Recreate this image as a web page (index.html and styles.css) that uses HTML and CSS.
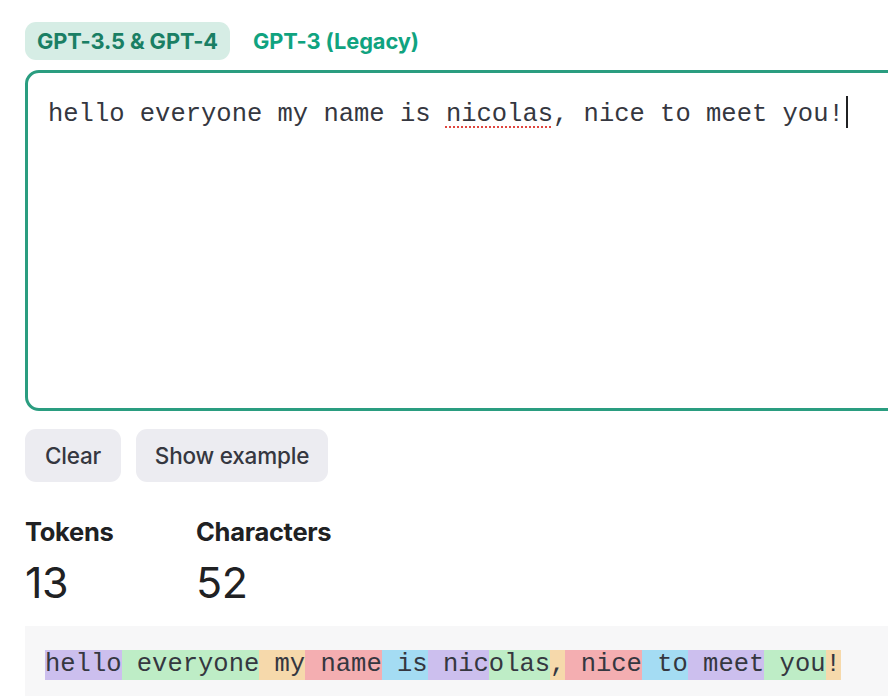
FILE: index.html
```html
<!DOCTYPE html>
<html lang="en">
<head>
<meta charset="utf-8">
<title>Tokenizer</title>
<link rel="stylesheet" href="styles.css">
</head>
<body>
<div class="page">
  <div class="tabs">
    <button class="tab tab-active">GPT-3.5 &amp; GPT-4</button>
    <button class="tab">GPT-3 (Legacy)</button>
  </div>
  <div class="editor"><span>hello everyone my name is </span><span class="misspelled">nicolas</span><span>, nice to meet you!</span><span class="caret"></span></div>
  <div class="actions">
    <button class="btn btn-clear">Clear</button>
    <button class="btn btn-example">Show example</button>
  </div>
  <div class="stats">
    <div class="stat stat-tokens">
      <div class="stat-label">Tokens</div>
      <div class="stat-value">13</div>
    </div>
    <div class="stat">
      <div class="stat-label">Characters</div>
      <div class="stat-value">52</div>
    </div>
  </div>
  <div class="tokens"><span class="t c1">hello</span><span class="t c2"> everyone</span><span class="t c3"> my</span><span class="t c4"> name</span><span class="t c5"> is</span><span class="t c1"> nic</span><span class="t c2">olas</span><span class="t c3">,</span><span class="t c4"> nice</span><span class="t c5"> to</span><span class="t c1"> meet</span><span class="t c2"> you</span><span class="t c3">!</span></div>
</div>
</body>
</html>
```

FILE: styles.css
```css
html, body {
  margin: 0;
  padding: 0;
  background: #ffffff;
  overflow: hidden;
}

.page {
  padding: 22px 0 0 25px;
  font-family: Inter, "Liberation Sans", sans-serif;
  color: #202123;
}

.tabs {
  display: flex;
  align-items: center;
}

.tab {
  font-family: Inter, "Liberation Sans", sans-serif;
  font-size: 21.8px;
  font-weight: 700;
  letter-spacing: -0.1px;
  color: #10a37f;
  background: transparent;
  border: none;
  border-radius: 11px;
  height: 38px;
  padding: 0 12px;
  margin: 0 11px 0 0;
  cursor: pointer;
}

.tab-active {
  background: #d6ede5;
  color: #1a7f64;
}

.editor {
  margin-top: 10px;
  width: 900px;
  height: 341px;
  box-sizing: border-box;
  border: 3px solid #2a9d80;
  border-radius: 14px;
  padding: 23px 20px;
  font-family: "Liberation Mono", monospace;
  font-size: 25.5px;
  line-height: 30px;
  color: #353740;
  white-space: pre;
}

.misspelled {
  text-decoration: underline dotted #e0463f;
  text-decoration-thickness: 2px;
  text-underline-offset: 5px;
}

.caret {
  display: inline-block;
  width: 2px;
  height: 32px;
  background: #202123;
  vertical-align: -7px;
  margin-left: 2px;
}

.actions {
  display: flex;
  gap: 15px;
  margin-top: 18px;
}

.btn {
  font-family: Inter, "Liberation Sans", sans-serif;
  font-size: 22.5px;
  font-weight: 500;
  letter-spacing: -0.2px;
  color: #353740;
  background: #ececf1;
  border: none;
  border-radius: 11px;
  height: 53px;
  padding: 0;
}

.btn-clear {
  width: 96px;
}

.btn-example {
  width: 192px;
}

.stats {
  display: flex;
  margin-top: 34px;
}

.stat-tokens {
  width: 171px;
}

.stat-label {
  font-size: 25.5px;
  font-weight: 700;
  letter-spacing: -0.3px;
  line-height: 32px;
  color: #202123;
}

.stat-value {
  margin-top: 8px;
  font-size: 43px;
  font-weight: 400;
  line-height: 52px;
  letter-spacing: -0.5px;
  color: #202123;
}

.tokens {
  margin-top: 18px;
  background: #f7f7f8;
  width: 900px;
  height: 120px;
  box-sizing: border-box;
  padding: 24px 20px;
  font-family: "Liberation Mono", monospace;
  font-size: 25.5px;
  line-height: 30px;
  color: #353740;
  white-space: pre;
}

.t {
  display: inline-block;
  height: 30px;
}

.c1 { background: rgba(107, 64, 216, 0.3); }
.c2 { background: rgba(104, 222, 122, 0.4); }
.c3 { background: rgba(244, 172, 54, 0.4); }
.c4 { background: rgba(239, 65, 70, 0.4); }
.c5 { background: rgba(39, 181, 234, 0.4); }
```
